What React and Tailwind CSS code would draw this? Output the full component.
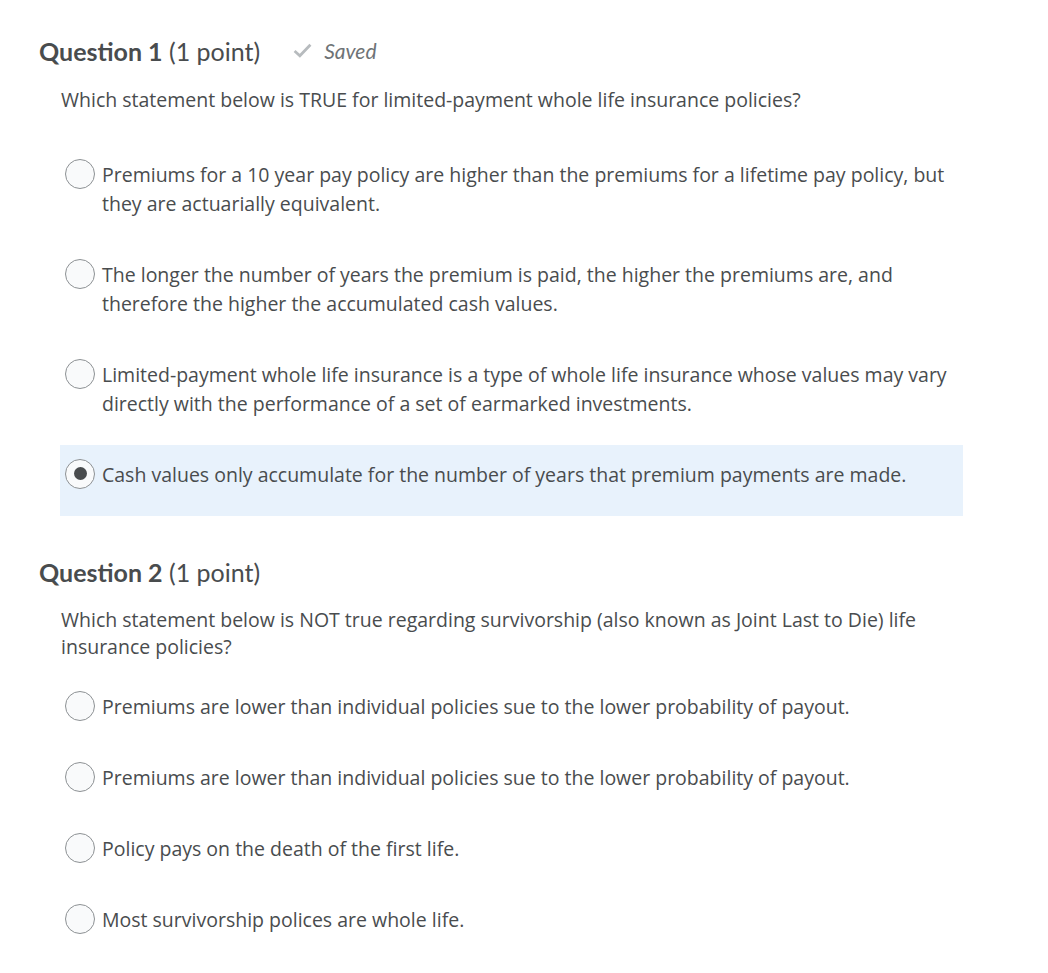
import React from "react";

const q1Options = [
  "Premiums for a 10 year pay policy are higher than the premiums for a lifetime pay policy, but they are actuarially equivalent.",
  "The longer the number of years the premium is paid, the higher the premiums are, and therefore the higher the accumulated cash values.",
  "Limited-payment whole life insurance is a type of whole life insurance whose values may vary directly with the performance of a set of earmarked investments.",
  "Cash values only accumulate for the number of years that premium payments are made.",
];

const q2Options = [
  "Premiums are lower than individual policies sue to the lower probability of payout.",
  "Premiums are lower than individual policies sue to the lower probability of payout.",
  "Policy pays on the death of the first life.",
  "Most survivorship polices are whole life.",
];

function Radio({ checked }) {
  return (
    <span className="flex h-[30px] w-[30px] shrink-0 items-center justify-center rounded-full border border-[#8d9194] bg-[#f9fafb]">
      {checked && <span className="h-[13px] w-[13px] rounded-full bg-[#494c4e]" />}
    </span>
  );
}

function Option({ text, checked }) {
  return (
    <div
      className={
        "flex items-start gap-[7px] pl-[5px] pt-[14px] pb-[27px] " +
        (checked ? "bg-[#e8f2fc]" : "")
      }
    >
      <Radio checked={checked} />
      <p className="pt-[1px] text-[19.5px] leading-[29px] text-[#494c4e]">{text}</p>
    </div>
  );
}

function Question({ num, saved, prompt, options, selected, promptClass }) {
  return (
    <section>
      <div className="flex items-center pl-[39px]">
        <h2 className="text-[25px] leading-[30px] text-[#494c4e]" style={{ fontFamily: "Lato, sans-serif" }}>
          <span className="font-bold">Question {num}</span> (1 point)
        </h2>
        {saved && (
          <span className="ml-[33px] flex items-center gap-[12px] text-[#6e7376]">
            <svg width="19" height="15" viewBox="0 0 18 14">
              <path d="M1.5 7.5 L6.5 12 L16.5 1.5" fill="none" stroke="#b7bbbe" strokeWidth="2.6" />
            </svg>
            <span className="text-[21px] italic" style={{ fontFamily: "Lato, sans-serif" }}>Saved</span>
          </span>
        )}
      </div>
      <p className={"pl-[61px] pr-[120px] text-[19.5px] leading-[27px] text-[#494c4e] " + promptClass}>{prompt}</p>
      <div className="ml-[60px] w-[903px]">
        {options.map((o, i) => (
          <Option key={i} text={o} checked={i === selected} />
        ))}
      </div>
    </section>
  );
}

export default function App() {
  return (
    <div className="min-h-screen bg-white pt-[35px]" style={{ fontFamily: "'Open Sans', sans-serif" }}>
      <Question
        num={1}
        saved
        prompt="Which statement below is TRUE for limited-payment whole life insurance policies?"
        options={q1Options}
        selected={3}
        promptClass="mt-[19px] mb-[32px]"
      />
      <div className="h-[41px]" />
      <Question
        num={2}
        prompt="Which statement below is NOT true regarding survivorship (also known as Joint Last to Die) life insurance policies?"
        options={q2Options}
        selected={-1}
        promptClass="mt-[19px] mb-[17px]"
      />
    </div>
  );
}
